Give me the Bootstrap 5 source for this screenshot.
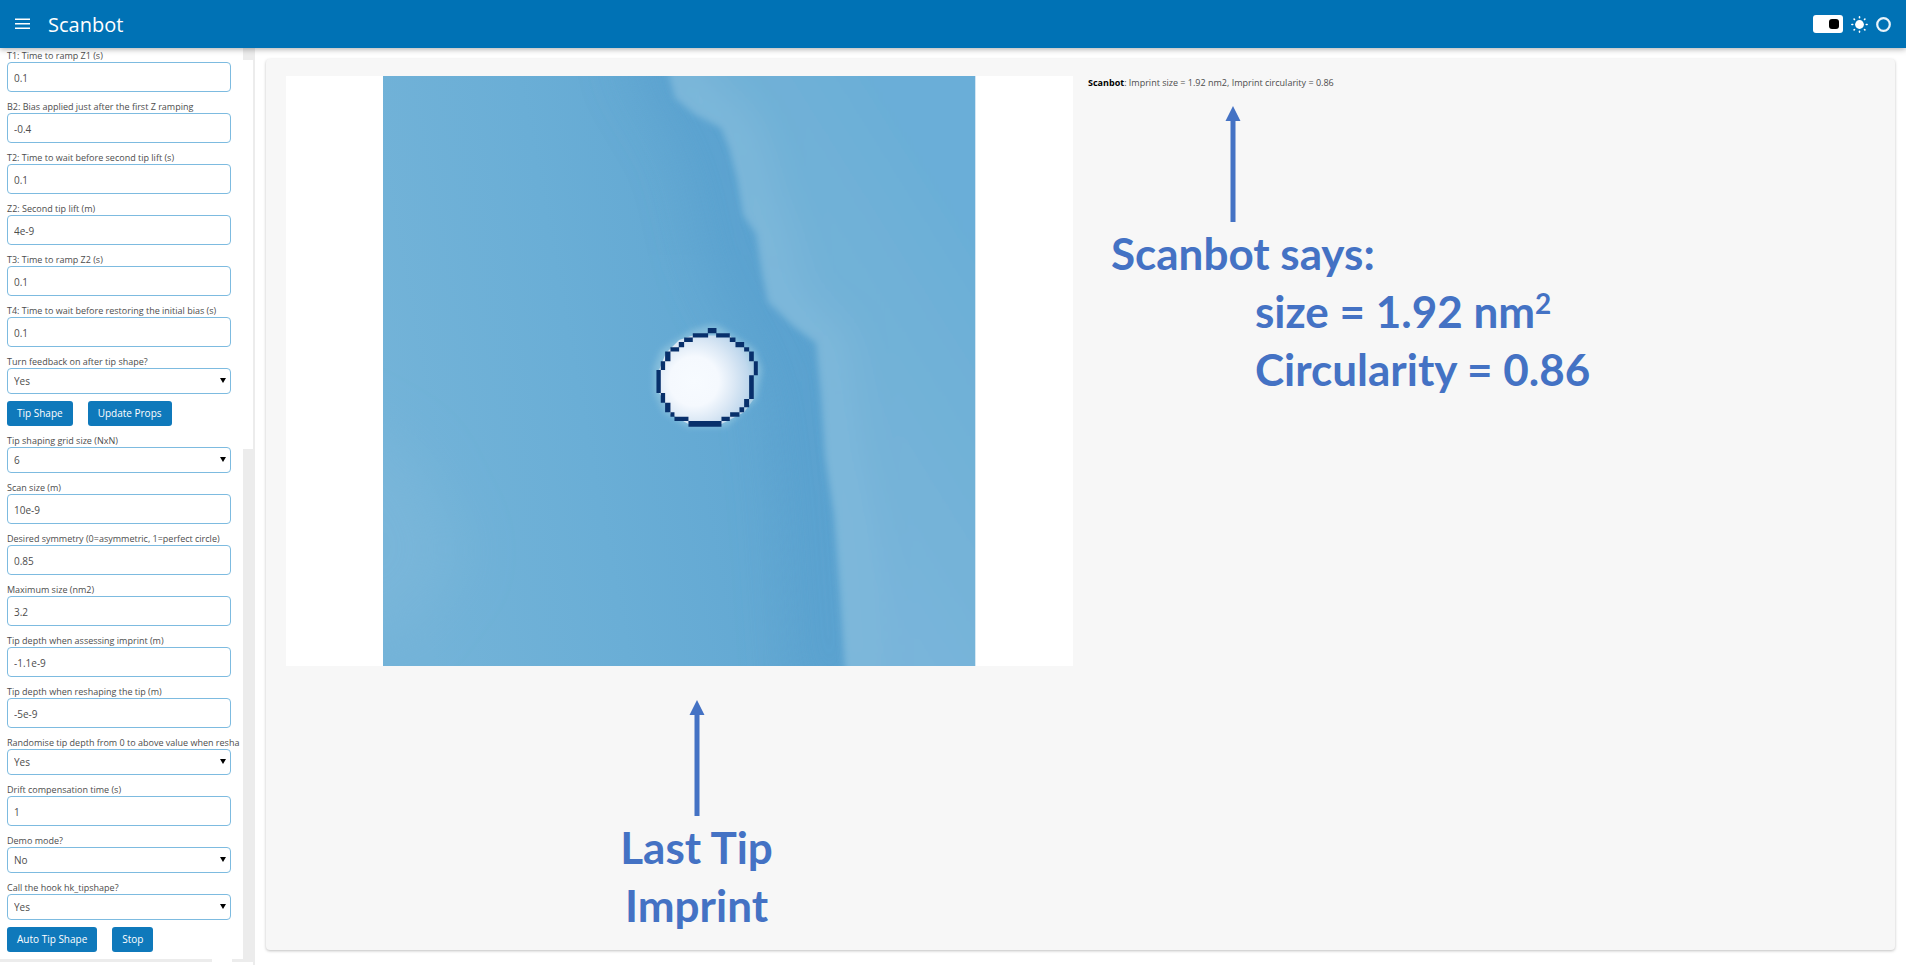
<!DOCTYPE html>
<html lang="en">
<head>
<meta charset="utf-8">
<meta name="viewport" content="width=device-width, initial-scale=1">
<title>Scanbot</title>
<link href="https://cdn.jsdelivr.net/npm/bootstrap@5.3.0/dist/css/bootstrap.min.css" rel="stylesheet">
<style>
  body { font-family: "Open Sans", "Noto Sans", sans-serif; font-size: 10px; color: #4d4d4d; background: #fff; }
  .topbar { height: 47px; background: #0072b5; box-shadow: 0 1px 0 #0072b5, 0 2px 6px rgba(0,0,0,.35); z-index: 2; padding: 1px 15px 0; }
  .topbar .brand-name { font-size: 20px; line-height: 28px; color: #fff; margin-left: 18px; padding-top: 1px; }
  .icon-btn { background: none; border: 0; padding: 0; display: flex; }
  .theme-switch { appearance: none; width: 30px; height: 18px; margin: 0 8px 0 0; border-radius: 3px; background: #fff; display: flex; align-items: center; justify-content: flex-end; padding-right: 4px; }
  .theme-switch::after { content: ""; width: 10px; height: 10px; border-radius: 3px; background: #000; }
  .sidebar { width: 255px; flex: none; border-right: 2px solid #ececec; }
  .props { padding: 0 0 7px 7px; overflow: hidden; }
  .field { margin-top: 6px; }
  .field:first-child { margin-top: 0; }
  .field label { display: block; height: 15px; line-height: 18px; font-size: 9px; white-space: nowrap; }
  .field .form-control, .field .form-select { width: 224px; font-size: 10px; color: #4d4d4d; line-height: 15px; border: 1px solid #7dbbe0; border-radius: 4px; padding: 0 6px; background-color: #fff; }
  .field .form-control { height: 30px; min-height: 0; padding-top: 2px; }
  .field .form-select { height: 26px; background-image: none; appearance: none; }
  .pick { position: relative; width: 224px; }
  .pick svg { position: absolute; right: 5px; top: 10px; pointer-events: none; }
  .actions { margin-top: 7px; gap: 15px; }
  .actions .btn { height: 25px; padding: 0 10px; border: 0; border-radius: 3px; background: #0f79bb; color: #fff; font-size: 10px; font-weight: 500; line-height: 25px; }
  .vtrack { width: 10px; background: #ececec; padding-top: 13px; }
  .vthumb { height: 389px; background: #fff; }
  .htrack { height: 3px; background: #ececec; padding-left: 212px; }
  .hthumb { width: 20px; height: 3px; background: #fff; }
  .board { margin: 12px 11px 15px 11px; padding: 17px 20px 12px; background: #f7f7f7; border-radius: 4px; box-shadow: 0 1px 3px rgba(0,0,0,.25); gap: 15px; }
  .half { flex: 1 1 0; min-width: 0; }
  .plot { aspect-ratio: 788 / 591; background: #fff; }
  .plot svg { height: 100%; }
  .note { font-family: Lato, Carlito, sans-serif; font-weight: 700; font-size: 44px; line-height: 58px; color: #4472c4; margin-top: 2px; }
  .caption-left { margin-top: 34px; padding-left: 34px; }
  .log { font-size: 9px; line-height: 14px; }
  .says { margin-top: 16px; padding-left: 23px; }
  .says svg { margin-left: 114px; }
  .says .inner-note { padding-left: 144px; }
  .says sup { font-size: 28px; line-height: 0; top: 0; vertical-align: 14px; }
</style>
</head>
<body>
<div class="d-flex flex-column min-vh-100">
  <header class="topbar d-flex align-items-center position-relative">
    <button class="icon-btn" type="button" aria-label="Menu">
      <svg width="15" height="12" viewBox="0 0 15 12" fill="#fff"><path d="M0 0.500h15v1.500H0zM0 5h15v1.500H0zM0 9.500h15V11H0z"/></svg>
    </button>
    <span class="brand-name">Scanbot</span>
    <div class="d-flex align-items-center ms-auto">
      <input class="theme-switch" type="checkbox" aria-label="Dark theme">
      <svg width="17" height="17" viewBox="0 0 17 17" fill="#fff"><circle cx="8.500" cy="8.500" r="4.400"/><g stroke="#fff" stroke-width="1.600" stroke-linecap="round"><path d="M8.500 .9v.8M8.500 15.300v.8M.9 8.500h.8M15.300 8.500h.8M3.100 3.100l.4.400M13.500 13.500l.4.400M3.100 13.900l.4-.4M13.500 3.500l.4-.4"/></g></svg>
      <svg class="ms-2" width="15" height="15" viewBox="0 0 15 15"><circle cx="7.500" cy="7.500" r="6.300" fill="none" stroke="#e9f3fa" stroke-width="2.200"/></svg>
    </div>
  </header>
  <div class="d-flex flex-grow-1">
    <aside class="sidebar d-flex flex-column">
      <div class="d-flex">
      <form class="props flex-grow-1">
        <div class="field"><label for="t1">T1: Time to ramp Z1 (s)</label><input class="form-control" id="t1" value="0.1"></div>
        <div class="field"><label for="b2">B2: Bias applied just after the first Z ramping</label><input class="form-control" id="b2" value="-0.4"></div>
        <div class="field"><label for="t2">T2: Time to wait before second tip lift (s)</label><input class="form-control" id="t2" value="0.1"></div>
        <div class="field"><label for="z2">Z2: Second tip lift (m)</label><input class="form-control" id="z2" value="4e-9"></div>
        <div class="field"><label for="t3">T3: Time to ramp Z2 (s)</label><input class="form-control" id="t3" value="0.1"></div>
        <div class="field"><label for="t4">T4: Time to wait before restoring the initial bias (s)</label><input class="form-control" id="t4" value="0.1"></div>
        <div class="field"><label for="fb">Turn feedback on after tip shape?</label><div class="pick"><select class="form-select" id="fb"><option>Yes</option><option>No</option></select><svg width="6" height="5"><path d="M0 0h6L3 5z"/></svg></div></div>
        <div class="actions d-flex"><button class="btn" type="button">Tip Shape</button><button class="btn" type="button">Update Props</button></div>
        <div class="field"><label for="grid">Tip shaping grid size (NxN)</label><div class="pick"><select class="form-select" id="grid"><option>6</option></select><svg width="6" height="5"><path d="M0 0h6L3 5z"/></svg></div></div>
        <div class="field"><label for="scan">Scan size (m)</label><input class="form-control" id="scan" value="10e-9"></div>
        <div class="field"><label for="sym">Desired symmetry (0=asymmetric, 1=perfect circle)</label><input class="form-control" id="sym" value="0.85"></div>
        <div class="field"><label for="max">Maximum size (nm2)</label><input class="form-control" id="max" value="3.2"></div>
        <div class="field"><label for="depth">Tip depth when assessing imprint (m)</label><input class="form-control" id="depth" value="-1.1e-9"></div>
        <div class="field"><label for="reshape">Tip depth when reshaping the tip (m)</label><input class="form-control" id="reshape" value="-5e-9"></div>
        <div class="field"><label for="rand">Randomise tip depth from 0 to above value when resha</label><div class="pick"><select class="form-select" id="rand"><option>Yes</option><option>No</option></select><svg width="6" height="5"><path d="M0 0h6L3 5z"/></svg></div></div>
        <div class="field"><label for="drift">Drift compensation time (s)</label><input class="form-control" id="drift" value="1"></div>
        <div class="field"><label for="demo">Demo mode?</label><div class="pick"><select class="form-select" id="demo"><option>No</option><option>Yes</option></select><svg width="6" height="5"><path d="M0 0h6L3 5z"/></svg></div></div>
        <div class="field"><label for="hook">Call the hook hk_tipshape?</label><div class="pick"><select class="form-select" id="hook"><option>Yes</option><option>No</option></select><svg width="6" height="5"><path d="M0 0h6L3 5z"/></svg></div></div>
        <div class="actions d-flex"><button class="btn" type="button">Auto Tip Shape</button><button class="btn" type="button">Stop</button></div>
      </form>
      <div class="vtrack flex-shrink-0"><div class="vthumb"></div></div>
      </div>
      <div class="htrack"><div class="hthumb"></div></div>
    </aside>
    <main class="board d-flex flex-grow-1">
      <section class="half">
        <div class="plot d-flex justify-content-center">
          <svg viewBox="0 0 592 590" role="img" aria-label="Last tip imprint">
            <defs>
              <linearGradient id="low" x1="0" y1=".55" x2=".8" y2=".4"><stop offset="0" stop-color="#73b3d8"/><stop offset=".4" stop-color="#6aaed6"/><stop offset="1" stop-color="#5ca3d0"/></linearGradient>
              <linearGradient id="high" gradientUnits="userSpaceOnUse" x1="380" y1="330" x2="620" y2="180"><stop offset="0" stop-color="#79b5da"/><stop offset=".6" stop-color="#70b1d7"/><stop offset="1" stop-color="#6aaed8"/></linearGradient>
              <radialGradient id="tip" gradientUnits="userSpaceOnUse" cx="165" cy="212" r="185"><stop offset="0" stop-color="#f7fbff"/><stop offset=".4" stop-color="#f5f9fe"/><stop offset=".65" stop-color="#dbe8f5"/><stop offset=".88" stop-color="#c0d8ed"/><stop offset="1" stop-color="#a6cde3"/></radialGradient>
              <filter id="edge"><feGaussianBlur stdDeviation="3"/></filter>
              <filter id="glow" x="-30%" width="160%"><feGaussianBlur stdDeviation="18"/></filter>
              <filter id="wide" x="-50%" y="-50%" width="200%" height="200%"><feGaussianBlur stdDeviation="28"/></filter>
              <filter id="halo" x="-20%" y="-20%" width="140%" height="140%"><feGaussianBlur stdDeviation="9"/></filter>
              <clipPath id="frame"><path d="M0 0h592v590H0z"/></clipPath>
            </defs>
            <g clip-path="url(#frame)">
              <path fill="url(#low)" d="M0 0h592v590H0z"/>
              <path fill="#7bb7da" opacity=".7" filter="url(#wide)" d="M-60 330L30 380 80 480 20 560H-60z"/>
              <path fill="none" stroke="#579fce" stroke-width="60" opacity=".7" filter="url(#wide)" d="M270-40L335 70 360 180 420 290 435 420 450 630"/>
              <g filter="url(#edge)">
                <clipPath id="terrace"><path d="M286-20V0L292 22 311 38 338 52 346 72 354 103 360 139 373 158 379 198 385 226 410 250 433 267 438 320 442 380 451 439 457 518 463 610H640V-20z"/></clipPath>
                <g clip-path="url(#terrace)">
                  <path fill="url(#high)" d="M240-20h400v640H240z"/>
                  <path fill="none" stroke="#80b9da" stroke-width="40" opacity=".8" filter="url(#glow)" d="M299-20V0L306 18 350 48 360 72 368 103 374 139 386 158 392 198 398 226 423 250 446 267 451 320 455 380 464 439 470 518 476 610"/>
                </g>
              </g>
              <g transform="translate(256 234.500) scale(.3333)">
                <path fill="#8cc2de" opacity=".85" filter="url(#halo)" d="M206 45h30l110 72 22 60-18 90-90 82H145l-72-45-28-60V170l22-52 90-58z"/>
                <path fill="url(#tip)" d="M161 75h111l17 18 41 30 22 40-8 32v70l-29 40-68 35H148l-54-30-16-34-18-30v-68l20-50 40-40z"/>
                <path fill="#08306b" d="M206 52h26v16h-26zM161 68h46v13h-46zM231 68h41v13h-41zM135 81h26v13h-26zM272 81h17v13h-17zM119 94h16v16h-16zM289 94h26v16h-26zM94 110h26v13H94zM315 110h15v13h-15zM78 123h16v29H78zM330 123h14v29h-14zM65 152h13v26H65zM344 152h12v42h-12zM52 178h13v69H52zM330 194h14v71h-14zM65 247h13v29H65zM315 265h15v25h-15zM78 276h16v29H78zM301 290h14v15h-14zM94 305h12v13H94zM273 305h28v13h-28zM106 318h42v13h-42zM247 318h25v13h-25zM148 331h99v17h-99z"/>
              </g>
            </g>
          </svg>
        </div>
        <div class="caption-left text-center">
          <svg class="d-block mx-auto" width="16" height="116" viewBox="0 0 16 116" fill="#4472c4"><path d="M8 0l7.500 15h-5v101h-5V15h-5z"/></svg>
          <div class="note">Last Tip<br>Imprint</div>
        </div>
      </section>
      <section class="half">
        <div class="log"><b class="text-black">Scanbot</b>: Imprint size = 1.92 nm2, Imprint circularity = 0.86</div>
        <div class="says">
          <svg class="d-block" width="16" height="116" viewBox="0 0 16 116" fill="#4472c4"><path d="M8 0l7.500 15h-5v101h-5V15h-5z"/></svg>
          <div class="note">Scanbot says:<div class="inner-note">size = 1.92 nm<sup>2</sup><br>Circularity = 0.86</div></div>
        </div>
      </section>
    </main>
  </div>
</div>
<script src="https://cdn.jsdelivr.net/npm/bootstrap@5.3.0/dist/js/bootstrap.bundle.min.js"></script>
</body>
</html>
